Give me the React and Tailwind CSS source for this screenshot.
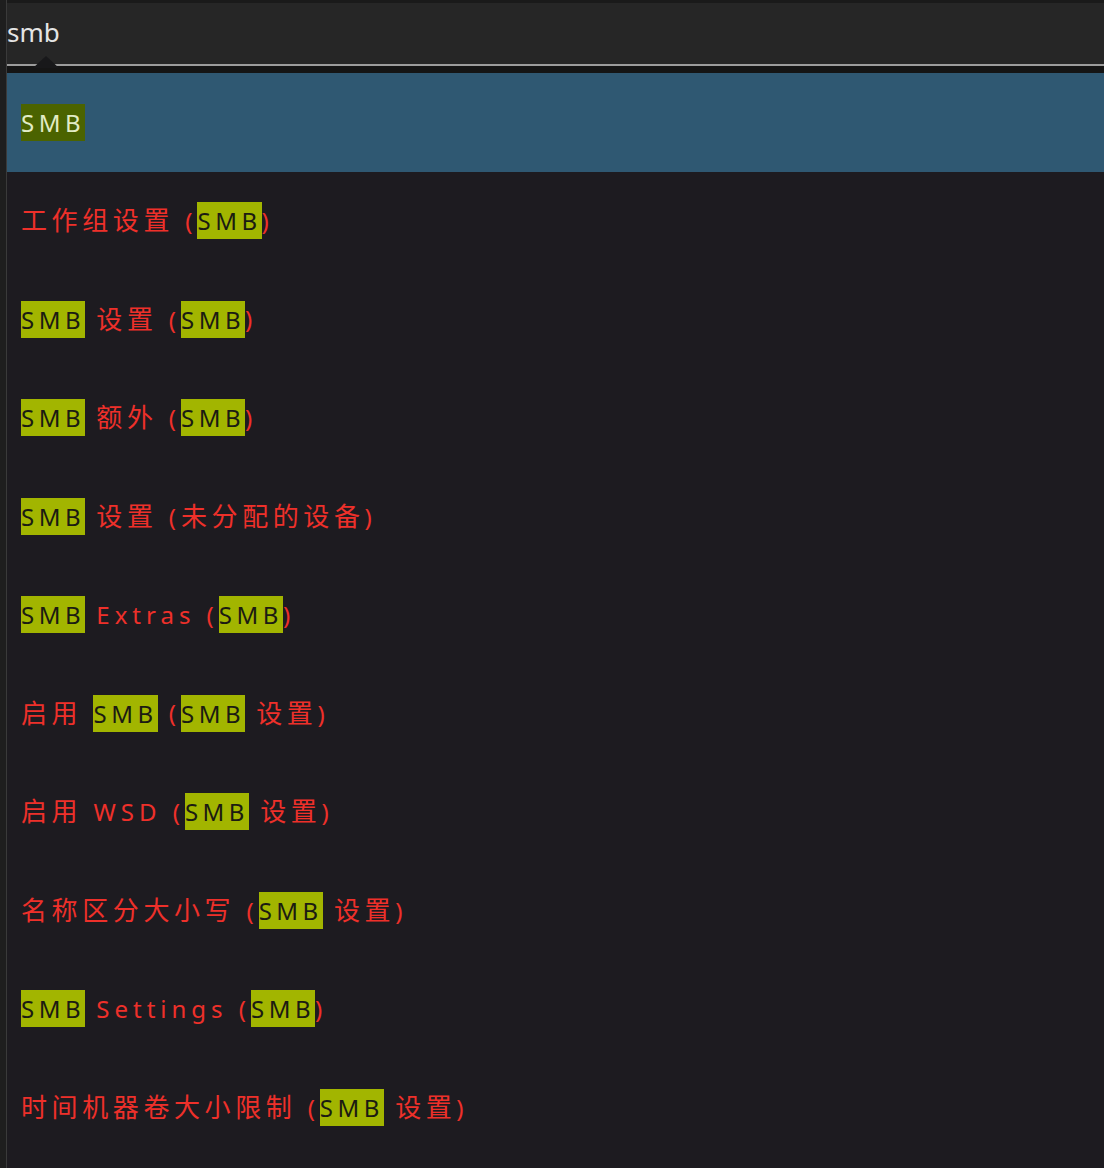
const FONT = { fontFamily: '"Noto Sans", "Noto Sans CJK SC", sans-serif' }

// each result is a list of parts; strings with hl: true get the match highlight
const RESULTS = [
  [{ t: 'SMB', hl: true }],
  [{ t: '工作组设置 (' }, { t: 'SMB', hl: true }, { t: ')' }],
  [{ t: 'SMB', hl: true }, { t: ' 设置 (' }, { t: 'SMB', hl: true }, { t: ')' }],
  [{ t: 'SMB', hl: true }, { t: ' 额外 (' }, { t: 'SMB', hl: true }, { t: ')' }],
  [{ t: 'SMB', hl: true }, { t: ' 设置 (未分配的设备)' }],
  [{ t: 'SMB', hl: true }, { t: ' Extras (' }, { t: 'SMB', hl: true }, { t: ')' }],
  [{ t: '启用 ' }, { t: 'SMB', hl: true }, { t: ' (' }, { t: 'SMB', hl: true }, { t: ' 设置)' }],
  [{ t: '启用 WSD (' }, { t: 'SMB', hl: true }, { t: ' 设置)' }],
  [{ t: '名称区分大小写 (' }, { t: 'SMB', hl: true }, { t: ' 设置)' }],
  [{ t: 'SMB', hl: true }, { t: ' Settings (' }, { t: 'SMB', hl: true }, { t: ')' }],
  [{ t: '时间机器卷大小限制 (' }, { t: 'SMB', hl: true }, { t: ' 设置)' }],
]

// split text into CJK / non-CJK runs, CJK glyphs render a bit larger
function runs(text) {
  return text.match(/[\u4e00-\u9fff]+|[^\u4e00-\u9fff]+/g) || []
}

export default function App() {
  return (
    <div className="w-[1104px] h-[1168px] overflow-hidden bg-[#1e1e1e] flex" style={FONT}>
      <div className="w-[6px] shrink-0 bg-[#1e1e1e]" />
      <div className="w-px shrink-0 bg-[#3a3a3a]" />
      <div className="flex-1 flex flex-col min-w-0">
        {/* search box */}
        <div className="h-[3px] bg-[#1a1a1a]" />
        <div className="h-[61px] bg-[#262626] flex items-center text-[26px] text-[#e4e4e4] leading-none pb-1">
          smb
        </div>
        <div className="h-[2px] bg-[#9c9c9c]" />
        <div className="relative h-[7px] bg-[#151515]">
          <div className="absolute left-[26px] -top-[10px] w-0 h-0 border-l-[13px] border-r-[13px] border-b-[12px] border-l-transparent border-r-transparent border-b-[#18181a]" />
        </div>

        {/* result list */}
        <div className="flex-1 bg-[#1d1b20] flex flex-col">
          {RESULTS.map((parts, i) => (
            <Row key={i} parts={parts} selected={i === 0} />
          ))}
        </div>
      </div>
    </div>
  )
}

function Row({ parts, selected }) {
  return (
    <div
      className={`h-[98.5px] shrink-0 flex items-center pl-[14px] text-[24px] tracking-[5px] whitespace-pre ${
        selected ? 'bg-[#2f5872] text-[#e6e6e6]' : 'text-[#ee302a]'
      }`}
    >
      {parts.map((p, j) =>
        p.hl ? (
          <span
            key={j}
            className={`inline-block leading-[37px] tracking-[4.5px] ${
              selected ? 'bg-[#4b6300] text-[#e2ecc6]' : 'bg-[#a2b500] text-[#1b1b12]'
            }`}
          >
            {p.t}
          </span>
        ) : (
          <span key={j}>
            {runs(p.t).map((r, k) =>
              /[\u4e00-\u9fff]/.test(r) ? (
                <span key={k} className="text-[26px] tracking-[4.6px]">{r}</span>
              ) : (
                <span key={k}>{r}</span>
              )
            )}
          </span>
        )
      )}
    </div>
  )
}
